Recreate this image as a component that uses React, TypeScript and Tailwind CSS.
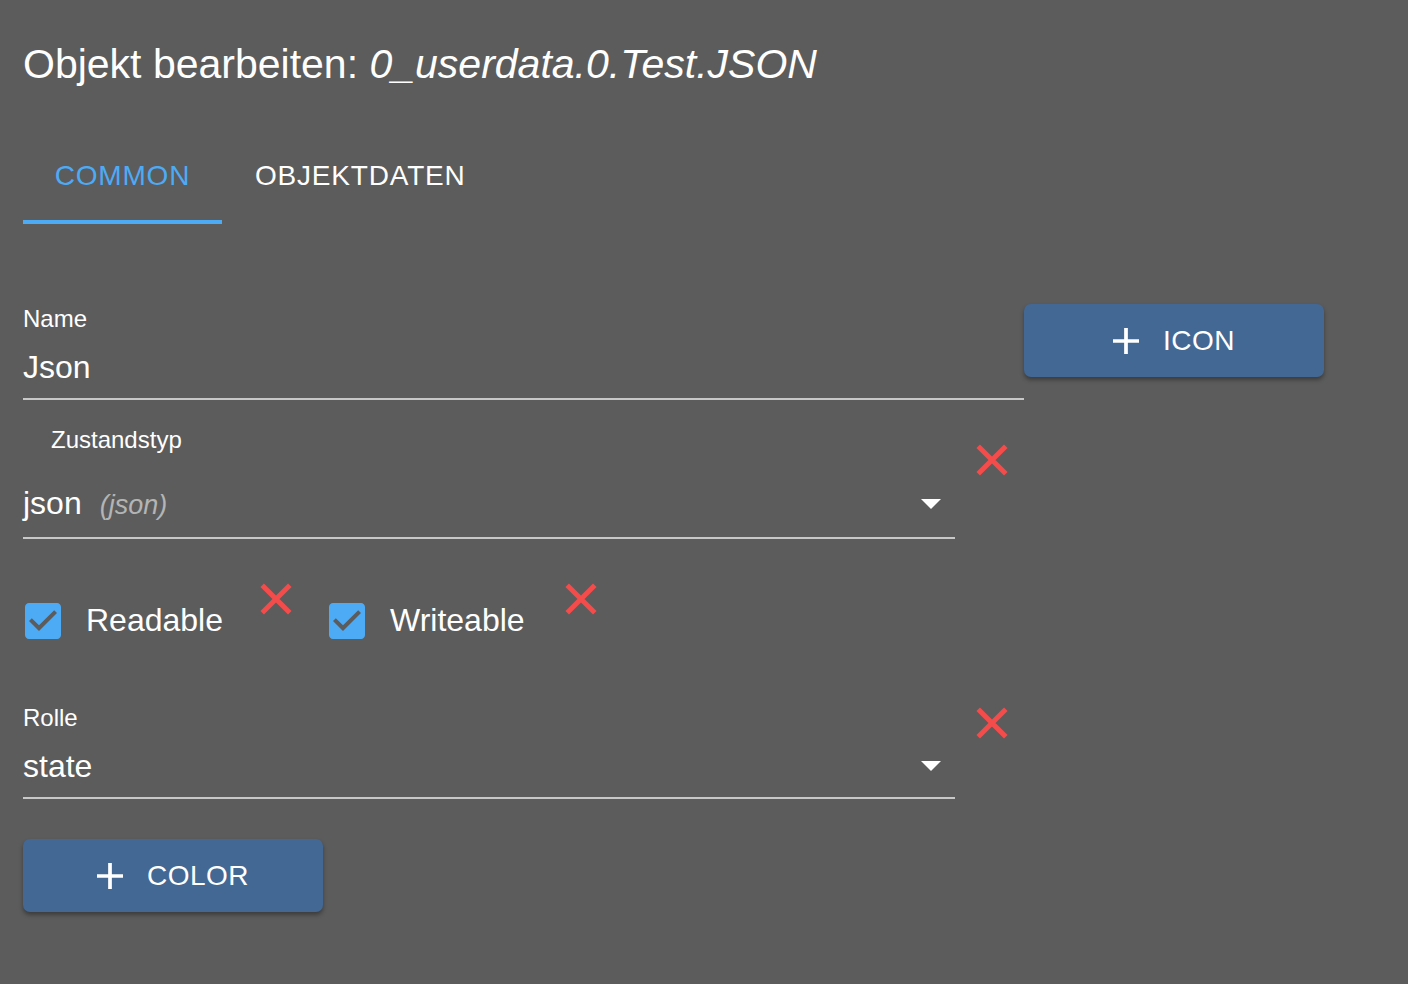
import React from "react";

const RedX = () => (
  <svg width="32" height="32" viewBox="0 0 32 32" className="shrink-0">
    <path
      stroke="#f44b4b"
      strokeWidth="5"
      strokeLinecap="butt"
      fill="none"
      d="M2.2 2.2L29.8 29.8M29.8 2.2L2.2 29.8"
    />
  </svg>
);

const Arrow = () => (
  <svg width="20" height="10" viewBox="7 10 10 5" className="shrink-0">
    <path fill="#ffffff" d="M7 10l5 5 5-5z" />
  </svg>
);

const Plus = () => (
  <svg width="26" height="26" viewBox="5 5 14 14" className="shrink-0">
    <path fill="#ffffff" d="M19 13h-6v6h-2v-6H5v-2h6V5h2v6h6v2z" />
  </svg>
);

const Check = () => (
  <svg width="36" height="36" viewBox="3 3 18 18" className="shrink-0">
    <path
      fill="#4dabf5"
      d="M19 3H5c-1.11 0-2 .9-2 2v14c0 1.1.89 2 2 2h14c1.11 0 2-.9 2-2V5c0-1.1-.89-2-2-2zm-9 14l-5-5 1.41-1.41L10 14.17l7.59-7.59L19 8l-9 9z"
    />
  </svg>
);

const Btn = ({ label }: { label: string }) => (
  <button className="flex h-[73px] w-[300px] shrink-0 items-center justify-center gap-[24px] rounded-[7px] bg-[#436894] text-[28px] uppercase tracking-[0.5px] text-white shadow-[0_3px_4px_rgba(0,0,0,0.35)]">
    <Plus />
    <span className="leading-none">{label}</span>
  </button>
);

export default function App() {
  return (
    <div className="min-h-screen bg-[#5c5c5c] pl-[23px] text-white font-['Liberation_Sans',Arial,sans-serif]">
      <h1 className="pt-[40px] text-[41px] leading-[48px] font-normal">
        Objekt bearbeiten: <i>0_userdata.0.Test.JSON</i>
      </h1>

      <div className="mt-[40px] flex h-[96px]">
        <div className="relative flex w-[199px] items-center justify-center text-[28px] tracking-[0.8px] text-[#4dabf5]">
          COMMON
          <div className="absolute bottom-0 left-0 h-[4px] w-full bg-[#4dabf5]" />
        </div>
        <div className="flex items-center pl-[33px] text-[28px] tracking-[0.8px] text-white">
          OBJEKTDATEN
        </div>
      </div>

      <div className="mt-[80px] flex w-[1301px] items-start">
        <div className="flex-1 border-b-2 border-[#c8c8c8] pb-[12px]">
          <div className="text-[24px] leading-[30px]">Name</div>
          <div className="mt-[14px] text-[32px] leading-[38px]">Json</div>
        </div>
        <Btn label="Icon" />
      </div>

      <div className="mt-[25px] flex items-start">
        <div className="w-[932px] border-b-2 border-[#c8c8c8] pb-[13px]">
          <div className="ml-[28px] text-[24px] leading-[30px]">Zustandstyp</div>
          <div className="mt-[29px] flex items-center justify-between pr-[14px]">
            <div className="flex items-baseline leading-[38px]">
              <span className="text-[32px]">json</span>
              <i className="ml-[18px] text-[27px] text-[#b4b4b4]">(json)</i>
            </div>
            <Arrow />
          </div>
        </div>
        <div className="ml-[21px] mt-[19px]">
          <RedX />
        </div>
      </div>

      <div className="mt-[44px] flex items-start">
        <div className="ml-[2px] mt-[20px]">
          <Check />
        </div>
        <span className="ml-[25px] mt-[19px] text-[32px] leading-[36px]">Readable</span>
        <div className="ml-[37px]">
          <RedX />
        </div>
        <div className="ml-[37px] mt-[20px]">
          <Check />
        </div>
        <span className="ml-[25px] mt-[19px] text-[32px] leading-[36px]">Writeable</span>
        <div className="ml-[40px]">
          <RedX />
        </div>
      </div>

      <div className="mt-[64px] flex items-start">
        <div className="w-[932px] border-b-2 border-[#c8c8c8] pb-[12px]">
          <div className="text-[24px] leading-[30px]">Rolle</div>
          <div className="mt-[14px] flex items-center justify-between pr-[14px]">
            <span className="text-[32px] leading-[38px]">state</span>
            <Arrow />
          </div>
        </div>
        <div className="ml-[21px] mt-[4px]">
          <RedX />
        </div>
      </div>

      <div className="mt-[40px] pb-[72px]">
        <Btn label="Color" />
      </div>
    </div>
  );
}
